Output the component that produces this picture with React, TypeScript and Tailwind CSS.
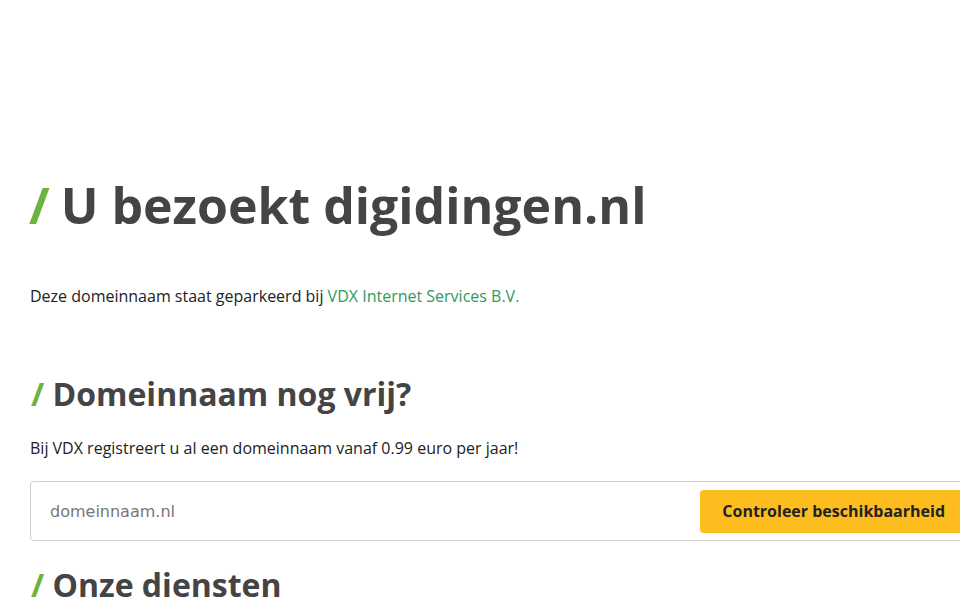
import React from "react";

export default function App() {
  return (
    <div className="w-[960px] h-[600px] overflow-hidden bg-white" style={{ fontFamily: '"Open Sans", sans-serif' }}>
      <div className="w-[1000px] pl-[30px] pt-[170px]">
        <h1 className="ml-[-1px] text-[50px] leading-[70px] font-bold text-[#444444]">
          <span className="text-[#6cb33f] mr-[-2px]">/</span> U bezoekt digidingen.nl
        </h1>
        <p className="mt-[44px] text-[16px] leading-[24px] text-[#222222]">
          Deze domeinnaam staat geparkeerd bij{" "}
          <a className="text-[#2e9a62]">VDX Internet Services B.V.</a>
        </p>
        <h2 className="mt-[62px] ml-[1px] text-[32px] leading-[48px] font-bold text-[#444444]">
          <span className="text-[#6cb33f]">/</span> Domeinnaam nog vrij?
        </h2>
        <p className="mt-[18px] text-[16px] leading-[24px] text-[#222222]">
          Bij VDX registreert u al een domeinnaam vanaf 0.99 euro per jaar!
        </p>
        <div className="mt-[21px] w-[945px] h-[60px] border border-[#d0d0d0] rounded-[4px] flex items-center pr-[7px]">
          <input
            className="flex-1 h-full pl-[19px] text-[16px] text-[#666] outline-none placeholder:text-[#777] bg-transparent"
            style={{ fontFamily: '"DejaVu Sans", sans-serif' }}
            placeholder="domeinnaam.nl"
          />
          <button className="h-[43px] px-[22px] bg-[#fdbd1f] rounded-[4px] text-[16px] font-bold text-[#222]">
            Controleer beschikbaarheid
          </button>
        </div>
        <h2 className="mt-[20px] ml-[1px] text-[32px] leading-[48px] font-bold text-[#444444]">
          <span className="text-[#6cb33f]">/</span> Onze diensten
        </h2>
      </div>
    </div>
  );
}
